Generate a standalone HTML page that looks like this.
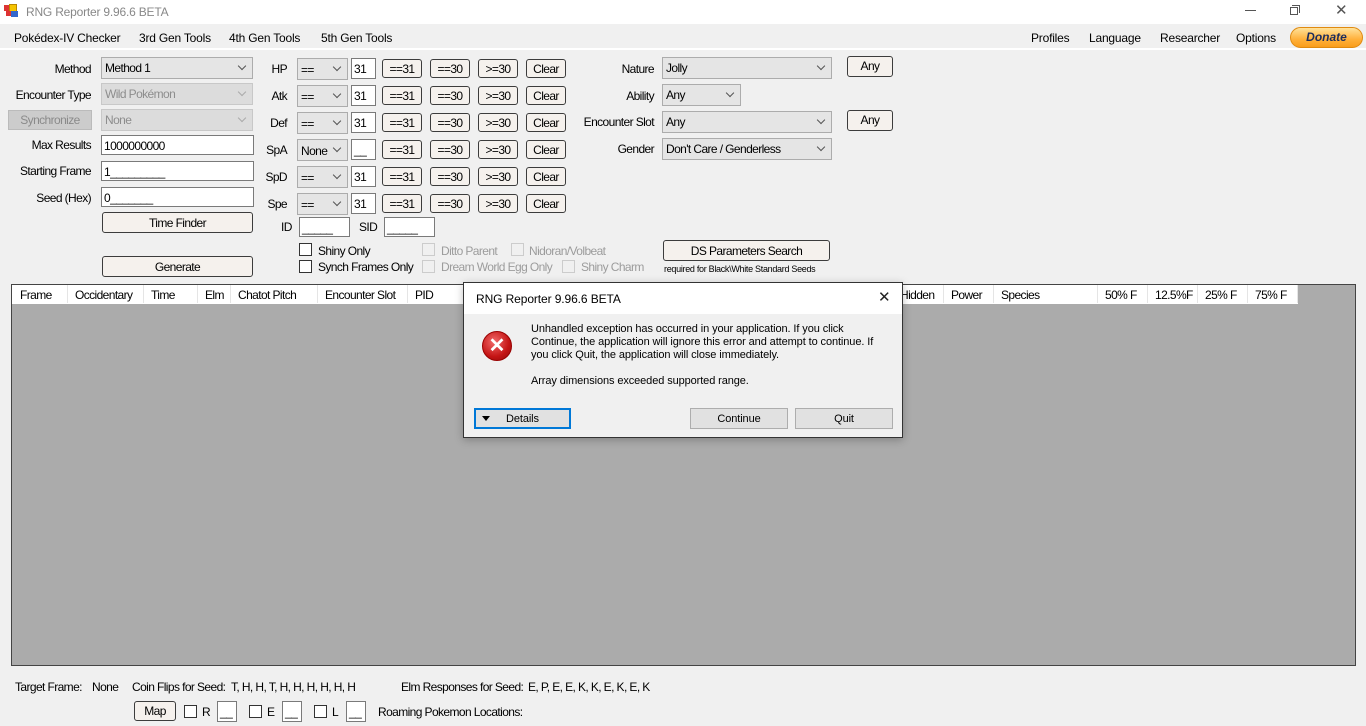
<!DOCTYPE html>
<html><head><meta charset="utf-8"><style>
*{box-sizing:border-box;margin:0;padding:0}
body{width:1366px;height:726px;overflow:hidden;background:#f0f0f0;font-family:"Liberation Sans",sans-serif;font-size:12px;color:#000;position:relative;letter-spacing:-0.6px}
.a{position:absolute;white-space:nowrap}
.lbl{position:absolute;text-align:right;white-space:nowrap;line-height:14px}
.sel{position:absolute;background:#e5e5e5;border:1px solid #acacac;height:22px;padding:4px 0 0 3px;line-height:14px}
.sel:after{content:"";position:absolute;right:7px;top:5px;width:5px;height:5px;border-right:1px solid #555;border-bottom:1px solid #555;transform:rotate(45deg)}
.dis{color:#8d8d8d;background:#dcdcdc;border-color:#c8c8c8}
.dis:after{border-color:#aaa}
.tb{position:absolute;background:#fff;border:1px solid #7a7a7a;height:20px;padding:3px 0 0 2px;line-height:14px}
.btn{position:absolute;background:#f5f1ed;border:1px solid #3c3c3c;border-radius:3px;height:19px;text-align:center;line-height:18px}
.cb{position:absolute;width:13px;height:13px;border:1px solid #333;background:#fff}
.cbd{border-color:#ccc;background:#f0f0f0}
.g{color:#9c9c9c}
.hdr{position:absolute;top:0;height:18px;line-height:20px;padding-left:8px;border-right:1px solid #e5e5e5}
</style></head><body>
<div class="a" style="left:0;top:0;width:1366px;height:24px;background:#fff"></div>
<div class="a" style="left:4px;top:5px;width:7px;height:6px;background:#d33"></div>
<div class="a" style="left:9px;top:4px;width:8px;height:8px;background:#f5c400;border:1px solid #b80"></div>
<div class="a" style="left:6px;top:11px;width:6px;height:5px;background:#d33"></div>
<div class="a" style="left:11px;top:11px;width:7px;height:6px;background:#36c"></div>
<div class="a" style="left:26px;top:5px;color:#888;font-size:12px;letter-spacing:-0.2px">RNG Reporter 9.96.6 BETA</div>
<div class="a" style="left:1245px;top:10px;width:11px;height:1px;background:#555"></div>
<div class="a" style="left:1290px;top:7px;width:8px;height:8px;border:1px solid #555"></div>
<div class="a" style="left:1292px;top:5px;width:8px;height:8px;border-top:1px solid #555;border-right:1px solid #555"></div>
<div class="a" style="left:1335px;top:1px;font-size:15px;color:#555;letter-spacing:0">✕</div>
<div class="a" style="left:0;top:24px;width:1366px;height:26px;background:#f0f0f0;border-bottom:2px solid #fff"></div>
<div class="a" style="left:14px;top:31px;letter-spacing:-0.2px">Pokédex-IV Checker</div>
<div class="a" style="left:139px;top:31px;letter-spacing:-0.2px">3rd Gen Tools</div>
<div class="a" style="left:229px;top:31px;letter-spacing:-0.2px">4th Gen Tools</div>
<div class="a" style="left:321px;top:31px;letter-spacing:-0.2px">5th Gen Tools</div>
<div class="a" style="left:1031px;top:31px;letter-spacing:-0.2px">Profiles</div>
<div class="a" style="left:1089px;top:31px;letter-spacing:-0.2px">Language</div>
<div class="a" style="left:1160px;top:31px;letter-spacing:-0.2px">Researcher</div>
<div class="a" style="left:1236px;top:31px;letter-spacing:-0.2px">Options</div>
<div class="a" style="left:1290px;top:27px;width:73px;height:21px;border-radius:11px;background:linear-gradient(#ffe29a,#ffb03a 60%,#f99d1c);border:1px solid #e08a10;text-align:center;line-height:19px;font-weight:bold;font-style:italic;color:#1d2d5c;letter-spacing:0">Donate</div>

<div class="lbl" style="right:1275px;top:62px">Method</div>
<div class="sel" style="left:101px;top:57px;width:152px;padding-top:3px">Method 1</div>
<div class="lbl" style="right:1275px;top:88px">Encounter Type</div>
<div class="sel dis" style="left:101px;top:83px;width:152px;padding-top:3px">Wild Pokémon</div>
<div class="a" style="left:8px;top:110px;width:84px;height:20px;background:#ccc;border:1px solid #bbb;color:#8a8a8a;text-align:center;line-height:19px">Synchronize</div>
<div class="sel dis" style="left:101px;top:109px;width:152px;padding-top:3px">None</div>
<div class="lbl" style="right:1275px;top:138px">Max Results</div>
<div class="tb" style="left:101px;top:135px;width:153px">1000000000</div>
<div class="lbl" style="right:1275px;top:164px">Starting Frame</div>
<div class="tb" style="left:101px;top:161px;width:153px">1_________</div>
<div class="lbl" style="right:1275px;top:191px">Seed (Hex)</div>
<div class="tb" style="left:101px;top:187px;width:153px">0_______</div>
<div class="btn" style="left:102px;top:212px;width:151px;height:21px;line-height:20px">Time Finder</div>
<div class="btn" style="left:102px;top:256px;width:151px;height:21px;line-height:21px">Generate</div>

<div class="lbl" style="right:1079px;top:62px">HP</div>
<div class="lbl" style="right:1079px;top:89px">Atk</div>
<div class="lbl" style="right:1079px;top:116px">Def</div>
<div class="lbl" style="right:1079px;top:143px">SpA</div>
<div class="lbl" style="right:1079px;top:170px">SpD</div>
<div class="lbl" style="right:1079px;top:197px">Spe</div>

<div class="sel" style="left:297px;top:58px;width:51px">==</div>
<div class="sel" style="left:297px;top:85px;width:51px">==</div>
<div class="sel" style="left:297px;top:112px;width:51px">==</div>
<div class="sel" style="left:297px;top:139px;width:51px">None</div>
<div class="sel" style="left:297px;top:166px;width:51px">==</div>
<div class="sel" style="left:297px;top:193px;width:51px">==</div>
<div class="tb" style="left:351px;top:58px;width:25px;height:21px">31</div>
<div class="tb" style="left:351px;top:85px;width:25px;height:21px">31</div>
<div class="tb" style="left:351px;top:112px;width:25px;height:21px">31</div>
<div class="tb" style="left:351px;top:139px;width:25px;height:21px">__</div>
<div class="tb" style="left:351px;top:166px;width:25px;height:21px">31</div>
<div class="tb" style="left:351px;top:193px;width:25px;height:21px">31</div>

<div class="btn" style="left:382px;top:59px;width:40px">==31</div><div class="btn" style="left:430px;top:59px;width:40px">==30</div><div class="btn" style="left:478px;top:59px;width:40px">&gt;=30</div><div class="btn" style="left:526px;top:59px;width:40px">Clear</div>
<div class="btn" style="left:382px;top:86px;width:40px">==31</div><div class="btn" style="left:430px;top:86px;width:40px">==30</div><div class="btn" style="left:478px;top:86px;width:40px">&gt;=30</div><div class="btn" style="left:526px;top:86px;width:40px">Clear</div>
<div class="btn" style="left:382px;top:113px;width:40px">==31</div><div class="btn" style="left:430px;top:113px;width:40px">==30</div><div class="btn" style="left:478px;top:113px;width:40px">&gt;=30</div><div class="btn" style="left:526px;top:113px;width:40px">Clear</div>
<div class="btn" style="left:382px;top:140px;width:40px">==31</div><div class="btn" style="left:430px;top:140px;width:40px">==30</div><div class="btn" style="left:478px;top:140px;width:40px">&gt;=30</div><div class="btn" style="left:526px;top:140px;width:40px">Clear</div>
<div class="btn" style="left:382px;top:167px;width:40px">==31</div><div class="btn" style="left:430px;top:167px;width:40px">==30</div><div class="btn" style="left:478px;top:167px;width:40px">&gt;=30</div><div class="btn" style="left:526px;top:167px;width:40px">Clear</div>
<div class="btn" style="left:382px;top:194px;width:40px">==31</div><div class="btn" style="left:430px;top:194px;width:40px">==30</div><div class="btn" style="left:478px;top:194px;width:40px">&gt;=30</div><div class="btn" style="left:526px;top:194px;width:40px">Clear</div>

<div class="a" style="left:281px;top:220px">ID</div>
<div class="tb" style="left:299px;top:217px;width:51px">_____</div>
<div class="a" style="left:359px;top:220px">SID</div>
<div class="tb" style="left:384px;top:217px;width:51px">_____</div>

<div class="cb" style="left:299px;top:243px"></div><div class="a" style="left:318px;top:244px">Shiny Only</div>
<div class="cb" style="left:299px;top:260px"></div><div class="a" style="left:318px;top:260px">Synch Frames Only</div>
<div class="cb cbd" style="left:422px;top:243px"></div><div class="a g" style="left:441px;top:244px">Ditto Parent</div>
<div class="cb cbd" style="left:511px;top:243px"></div><div class="a g" style="left:529px;top:244px">Nidoran/Volbeat</div>
<div class="cb cbd" style="left:422px;top:260px"></div><div class="a g" style="left:441px;top:260px">Dream World Egg Only</div>
<div class="cb cbd" style="left:562px;top:260px"></div><div class="a g" style="left:581px;top:260px">Shiny Charm</div>

<div class="lbl" style="right:712px;top:62px">Nature</div>
<div class="sel" style="left:662px;top:57px;width:170px;padding-top:3px">Jolly</div>
<div class="btn" style="left:847px;top:56px;width:46px;height:21px;line-height:19px">Any</div>
<div class="lbl" style="right:712px;top:89px">Ability</div>
<div class="sel" style="left:662px;top:84px;width:79px;padding-top:3px">Any</div>
<div class="lbl" style="right:712px;top:115px">Encounter Slot</div>
<div class="sel" style="left:662px;top:111px;width:170px;padding-top:3px">Any</div>
<div class="btn" style="left:847px;top:110px;width:46px;height:21px;line-height:19px">Any</div>
<div class="lbl" style="right:712px;top:142px">Gender</div>
<div class="sel" style="left:662px;top:138px;width:170px;padding-top:3px">Don't Care / Genderless</div>
<div class="btn" style="left:663px;top:240px;width:167px;height:21px;line-height:20px">DS Parameters Search</div>
<div class="a" style="left:664px;top:264px;font-size:9px;letter-spacing:-0.3px">required for Black\White Standard Seeds</div>

<div class="a" style="left:11px;top:284px;width:1345px;height:382px;background:#ababab;border:1px solid #444"></div>
<div class="a" style="left:12px;top:285px;width:1286px;height:19px;background:#fff">
<div class="hdr" style="left:0;width:56px">Frame</div>
<div class="hdr" style="left:55px;width:77px">Occidentary</div>
<div class="hdr" style="left:131px;width:55px">Time</div>
<div class="hdr" style="left:185px;width:34px">Elm</div>
<div class="hdr" style="left:218px;width:88px">Chatot Pitch</div>
<div class="hdr" style="left:305px;width:91px">Encounter Slot</div>
<div class="hdr" style="left:395px;width:60px">PID</div>
<div class="hdr" style="left:880px;width:52px;padding-left:8px">Hidden</div>
<div class="hdr" style="left:931px;width:51px">Power</div>
<div class="hdr" style="left:981px;width:105px">Species</div>
<div class="hdr" style="left:1085px;width:51px">50% F</div>
<div class="hdr" style="left:1135px;width:51px">12.5%F</div>
<div class="hdr" style="left:1185px;width:51px">25% F</div>
<div class="hdr" style="left:1235px;width:51px">75% F</div>
</div>

<div class="a" style="left:463px;top:282px;width:440px;height:156px;background:#f0f0f0;border:1px solid #333;box-shadow:0 2px 8px rgba(0,0,0,0.25);letter-spacing:-0.1px">
<div class="a" style="left:0;top:0;width:438px;height:31px;background:#fff"></div>
<div class="a" style="left:12px;top:9px;font-size:12px">RNG Reporter 9.96.6 BETA</div>
<div class="a" style="left:414px;top:5px;font-size:15px;color:#222">✕</div>
<div class="a" style="left:18px;top:48px;width:30px;height:30px;border-radius:50%;background:radial-gradient(circle at 40% 35%,#f26a6a,#c41414 60%,#8e0b0b);border:1px solid #900"></div>
<div class="a" style="left:22px;top:48px;color:#fff;font-size:20px;font-weight:bold;width:22px;text-align:center;line-height:30px">✕</div>
<div class="a" style="left:67px;top:40px;font-size:11px;line-height:13px;white-space:normal;width:345px">Unhandled exception has occurred in your application. If you click Continue, the application will ignore this error and attempt to continue. If you click Quit, the application will close immediately.</div>
<div class="a" style="left:67px;top:92px;font-size:11px">Array dimensions exceeded supported range.</div>
<div class="a" style="left:10px;top:125px;width:97px;height:21px;background:#e1e1e1;border:2px solid #0078d7;line-height:18px;font-size:11px"><span style="position:absolute;left:6px;top:6px;border-left:4px solid transparent;border-right:4px solid transparent;border-top:5px solid #000"></span><span style="position:absolute;left:30px">Details</span></div>
<div class="a" style="left:226px;top:125px;width:98px;height:21px;background:#e1e1e1;border:1px solid #adadad;text-align:center;line-height:20px;font-size:11px">Continue</div>
<div class="a" style="left:331px;top:125px;width:98px;height:21px;background:#e1e1e1;border:1px solid #adadad;text-align:center;line-height:20px;font-size:11px">Quit</div>
</div>

<div class="a" style="left:15px;top:680px">Target Frame:</div>
<div class="a" style="left:92px;top:680px">None</div>
<div class="a" style="left:132px;top:680px">Coin Flips for Seed:</div>
<div class="a" style="left:231px;top:680px">T, H, H, T, H, H, H, H, H, H</div>
<div class="a" style="left:401px;top:680px">Elm Responses for Seed:</div>
<div class="a" style="left:528px;top:680px">E, P, E, E, K, K, E, K, E, K</div>
<div class="btn" style="left:134px;top:701px;width:42px;height:20px;line-height:19px">Map</div>
<div class="cb" style="left:184px;top:705px"></div><div class="a" style="left:202px;top:705px">R</div>
<div class="tb" style="left:217px;top:701px;width:20px;height:21px">__</div>
<div class="cb" style="left:249px;top:705px"></div><div class="a" style="left:267px;top:705px">E</div>
<div class="tb" style="left:282px;top:701px;width:20px;height:21px">__</div>
<div class="cb" style="left:314px;top:705px"></div><div class="a" style="left:332px;top:705px">L</div>
<div class="tb" style="left:346px;top:701px;width:20px;height:21px">__</div>
<div class="a" style="left:378px;top:705px">Roaming Pokemon Locations:</div>
</body></html>
